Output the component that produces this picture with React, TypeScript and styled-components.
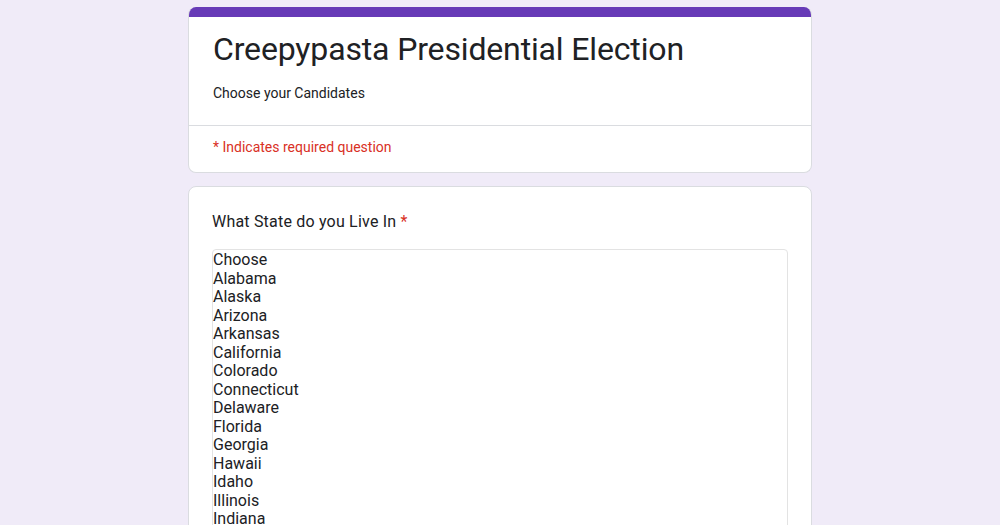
import * as React from 'react';
import styled, { createGlobalStyle } from 'styled-components';

var GlobalStyle = createGlobalStyle`
	html, body {
		margin: 0;
		padding: 0;
		background: #f0ebf8;
		font-family: Roboto, "Liberation Sans", Arial, sans-serif;
		color: #202124;
	}
`;

var STATES = [
	'Choose',
	'Alabama',
	'Alaska',
	'Arizona',
	'Arkansas',
	'California',
	'Colorado',
	'Connecticut',
	'Delaware',
	'Florida',
	'Georgia',
	'Hawaii',
	'Idaho',
	'Illinois',
	'Indiana',
];

export default function App() {
	return (
		<>
			<GlobalStyle />
			<Page>
				<HeaderCard>
					<Strip />
					<HeaderBody>
						<Title>Creepypasta Presidential Election</Title>
						<Subtitle>Choose your Candidates</Subtitle>
					</HeaderBody>
					<Divider />
					<Required>* Indicates required question</Required>
				</HeaderCard>

				<QuestionCard>
					<QuestionTitle>
						What State do you Live In <Star>*</Star>
					</QuestionTitle>
					<ListBox role='listbox'>
						{STATES.map((s) => (
							<Option key={s} role='option'>
								{s}
							</Option>
						))}
					</ListBox>
				</QuestionCard>
			</Page>
		</>
	);
}

var Page = styled.div`
	width: 624px;
	margin: 0 auto;
	padding-top: 7px;
	display: flex;
	flex-direction: column;
	gap: 13px;
	height: 518px;
	overflow: hidden;
`;

var Card = styled.div`
	background: #fff;
	border: 1px solid #dadce0;
	border-radius: 8px;
	box-sizing: border-box;
`;

var HeaderCard = styled(Card)`
	overflow: hidden;
	border-top: none;
	flex-shrink: 0;
`;

var Strip = styled.div`
	height: 10px;
	background: #673ab7;
`;

var HeaderBody = styled.div`
	padding: 12px 24px 22px;
	display: flex;
	flex-direction: column;
	gap: 14px;
`;

var Title = styled.h1`
	margin: 0;
	font-size: 32px;
	line-height: 40px;
	font-weight: 400;
	letter-spacing: -0.15px;
	color: #202124;
`;

var Subtitle = styled.div`
	font-size: 14px;
	line-height: 20px;
	color: #202124;
`;

var Divider = styled.div`
	height: 1px;
	background: #dadce0;
`;

var Required = styled.div`
	padding: 11px 24px 15px;
	font-size: 14px;
	line-height: 20px;
	color: #d93025;
`;

var QuestionCard = styled(Card)`
	padding: 23px 23px 24px;
	flex-shrink: 0;
`;

var QuestionTitle = styled.div`
	font-size: 16px;
	line-height: 24px;
	letter-spacing: 0.2px;
	color: #202124;
	margin-bottom: 15px;
`;

var Star = styled.span`
	color: #d93025;
`;

var ListBox = styled.div`
	border: 1px solid #e3e3e3;
	border-radius: 4px;
	padding: 1px 0 0 0;
	display: flex;
	flex-direction: column;
`;

var Option = styled.div`
	font-size: 16px;
	line-height: 18.5px;
	color: #202124;
	white-space: nowrap;
`;
